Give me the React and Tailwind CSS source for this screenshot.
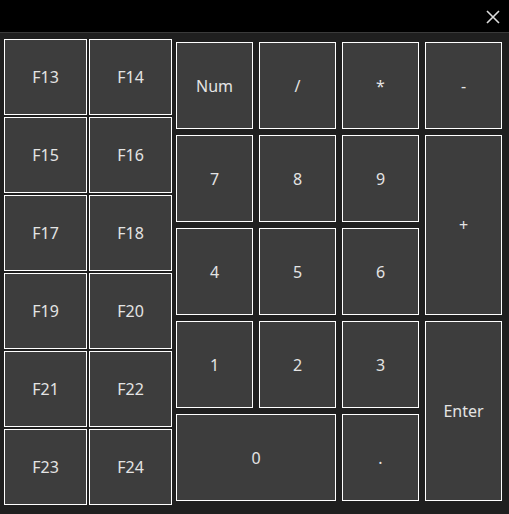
const fKeys = ["F13", "F14", "F15", "F16", "F17", "F18", "F19", "F20", "F21", "F22", "F23", "F24"];

const numKeys = [
  { label: "Num", cls: "" },
  { label: "/", cls: "" },
  { label: "*", cls: "" },
  { label: "-", cls: "" },
  { label: "7", cls: "" },
  { label: "8", cls: "" },
  { label: "9", cls: "" },
  { label: "+", cls: "row-span-2" },
  { label: "4", cls: "" },
  { label: "5", cls: "" },
  { label: "6", cls: "" },
  { label: "1", cls: "" },
  { label: "2", cls: "" },
  { label: "3", cls: "" },
  { label: "Enter", cls: "row-span-2" },
  { label: "0", cls: "col-span-2" },
  { label: ".", cls: "" },
];

const Key = ({ label, className = "" }) => (
  <button
    className={`flex items-center justify-center border border-white bg-[#3d3d3d] text-[16px] text-[#e4e4e4] ${className}`}
  >
    {label}
  </button>
);

const App = () => {
  return (
    <div
      className="flex h-[514px] w-[509px] flex-col overflow-hidden bg-[#1f1f1f]"
      style={{ fontFamily: '"Noto Sans", "Open Sans", sans-serif' }}
    >
      <div className="flex h-[33px] shrink-0 items-start justify-end border-b border-[#3a3a3a] bg-black pr-[9px] pt-[10px]">
        <svg width="14" height="14" viewBox="0 0 14 14">
          <path d="M1 1L13 13M13 1L1 13" stroke="#dcdcdc" strokeWidth="1.6" />
        </svg>
      </div>
      <div className="flex items-start pl-[4px] pt-[6px]">
        <div className="grid grid-cols-[83px_83px] auto-rows-[76px] gap-[2px]">
          {fKeys.map((k) => (
            <Key key={k} label={k} />
          ))}
        </div>
        <div className="ml-[4px] mt-[3px] grid grid-cols-[77px_77px_77px_77px] auto-rows-[87px] gap-[6px]">
          {numKeys.map((k) => (
            <Key key={k.label} label={k.label} className={k.cls} />
          ))}
        </div>
      </div>
    </div>
  );
};

export default App;
